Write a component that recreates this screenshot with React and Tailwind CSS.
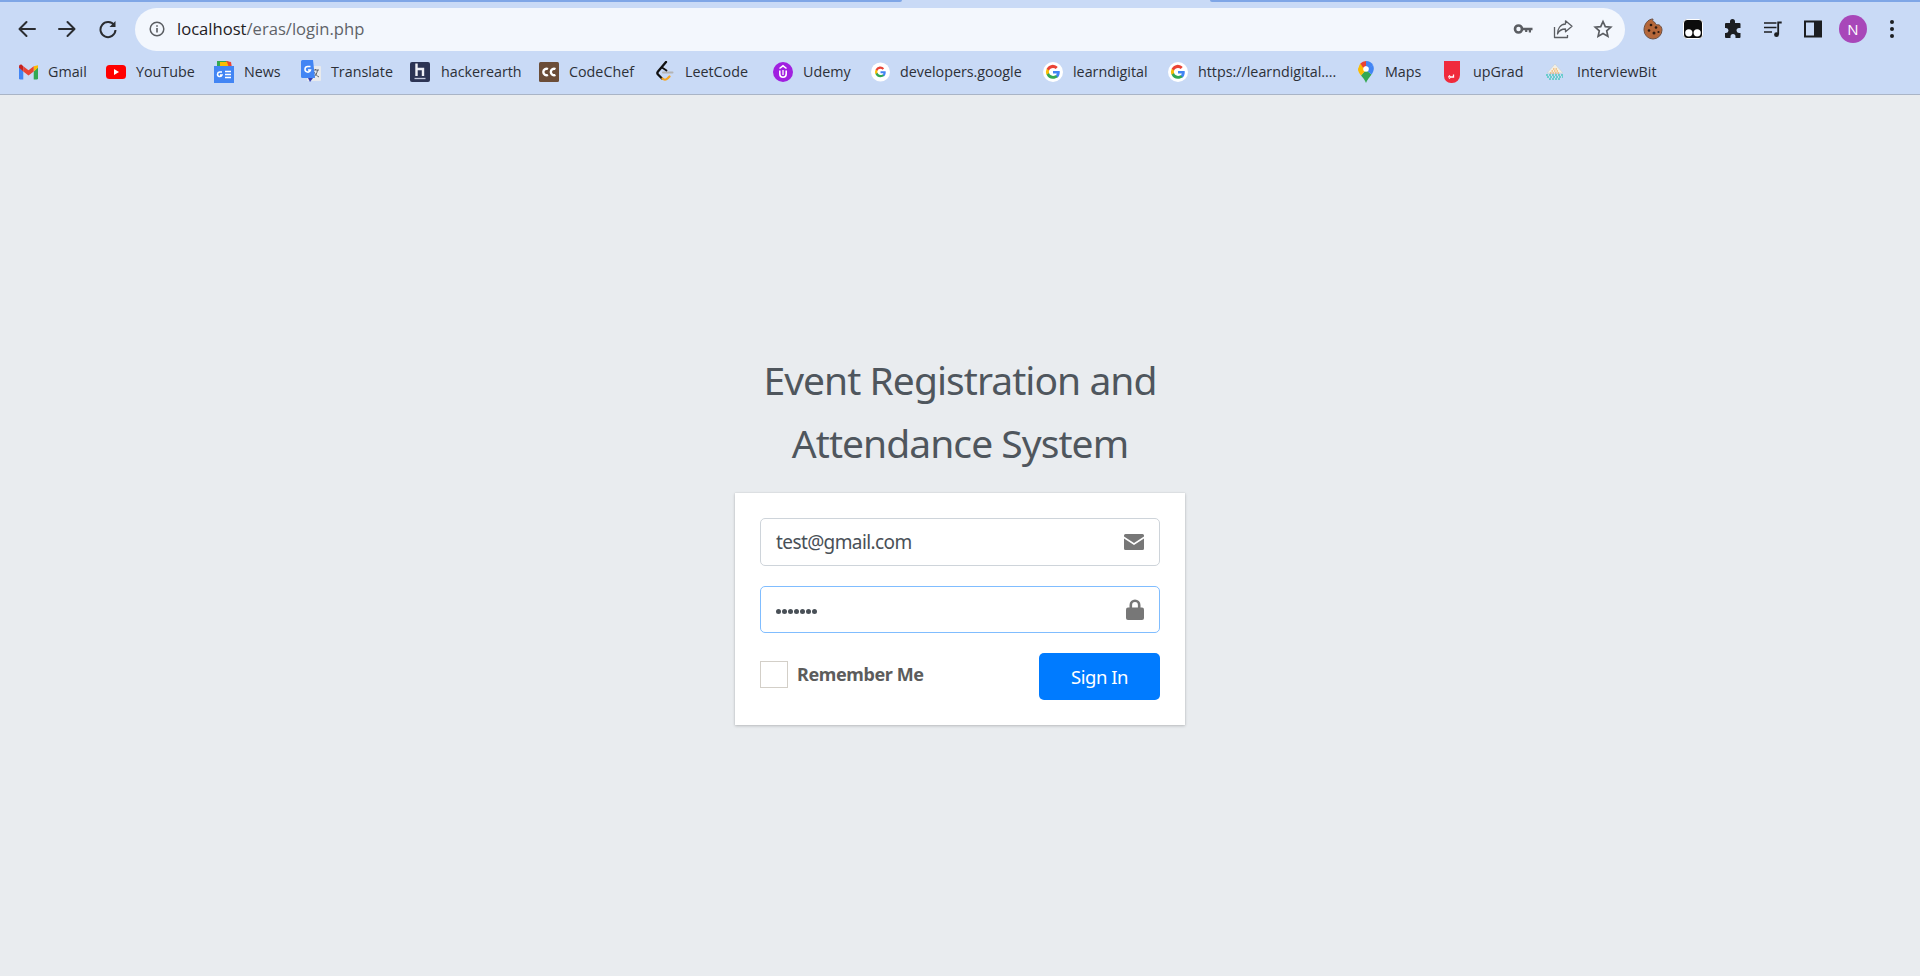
import React from "react";

const Gmail = () => (
  <svg width="20" height="16" viewBox="0 0 20 16" className="block">
    <path d="M0 3v11.5A1.5 1.5 0 0 0 1.5 16H4.5V7.5z" fill="#4285f4" />
    <path d="M20 3v11.5a1.5 1.5 0 0 1-1.500 1.500H15.500V7.500z" fill="#34a853" />
    <path d="M15.500 2 L20 0.800V3.500L15.500 7.500z" fill="#fbbc04" />
    <path d="M4.500 2 L10 6.200 15.500 2V7.500L10 11.600 4.500 7.500z" fill="#ea4335" />
    <path d="M0 3.500V2.200C0 .6 1.800-.4 3.100.6L4.500 2V7.500z" fill="#c5221f" />
  </svg>
);
const YouTube = () => (
  <svg width="20" height="14" viewBox="0 0 20 14" className="block">
    <rect width="20" height="14" rx="3.500" fill="#ff0000" />
    <path d="M8 4l5 3-5 3z" fill="#fff" />
  </svg>
);
const News = () => (
  <svg width="20" height="22" viewBox="0 0 20 22" className="block">
    <path d="M3 0h10l4 2v5H3z" fill="#34a853" />
    <path d="M12 0l5 1 1 6h-6z" fill="#ea4335" />
    <path d="M6 1h7l2 6H6z" fill="#fbbc04" />
    <rect y="5" width="20" height="17" fill="#4285f4" />
    <path d="M8 11H5.600A2.300 2.300 0 1 0 8 14H6" fill="none" stroke="#fff" strokeWidth="1.500" />
    <path d="M11 10.500h6M11 13.500h6M11 16.500h6" stroke="#fff" strokeWidth="1.500" />
  </svg>
);
const Translate = () => (
  <svg width="20" height="24" viewBox="0 0 20 24" className="block">
    <rect x="6" y="6" width="14" height="15" rx="1" fill="#e8eaed" />
    <path d="M11 10h7M14.500 9v1M12 17c3-1 4-4 4.500-7M13 12c1 2 3 4 5 5" stroke="#5f6368" strokeWidth="1" fill="none" />
    <path d="M1.500 0H12l2 18H1.500A1.500 1.500 0 0 1 0 16.500V1.500A1.500 1.500 0 0 1 1.500 0z" fill="#4285f4" />
    <path d="M9 22l-2-4h5z" fill="#3740b5" />
    <path d="M9.500 6.500H6.800A2.800 2.800 0 1 0 9.500 10H7" fill="none" stroke="#fff" strokeWidth="1.500" />
  </svg>
);
const Hacker = () => (
  <svg width="20" height="20" viewBox="0 0 20 20" className="block">
    <rect width="20" height="20" rx="2" fill="#2c3454" />
    <path d="M6.500 1.500V14M6.500 7h6.500V14" fill="none" stroke="#eef0f6" strokeWidth="2.400" />
    <path d="M4.500 16.500h11" stroke="#c4c9dc" strokeWidth="1.300" />
  </svg>
);
const CodeChef = () => (
  <svg width="20" height="20" viewBox="0 0 20 20" className="block">
    <rect width="20" height="20" rx="1.500" fill="#6b4d38" />
    <path d="M9 7A3.300 3.300 0 1 0 9 13M16.500 7A3.300 3.300 0 1 0 16.500 13" fill="none" stroke="#fff" strokeWidth="2.400" />
  </svg>
);
const LeetCode = () => (
  <svg width="18" height="22" viewBox="0 0 18 22" className="block">
    <path d="M10 1L2 10.500c-1 1.200-1 2 0 3l4 4" fill="none" stroke="#111" strokeWidth="2.300" strokeLinecap="round" />
    <path d="M6.500 17.500c1.500 1.500 3.500 1.500 5 0l2-2" fill="none" stroke="#f5a623" strokeWidth="2.300" strokeLinecap="round" />
    <path d="M7 11.500h9.500" stroke="#b4b4b4" strokeWidth="2" strokeLinecap="round" />
    <path d="M6 6.500l4.500 3" stroke="#111" strokeWidth="1.800" strokeLinecap="round" />
  </svg>
);
const Udemy = () => (
  <svg width="20" height="20" viewBox="0 0 20 20" className="block">
    <circle cx="10" cy="10" r="10" fill="#a020e0" />
    <path d="M6.800 8.500V12a3.200 3.200 0 0 0 6.400 0V8.500" fill="none" stroke="#fff" strokeWidth="1.600" />
    <path d="M6.500 6.500L10 3.800l3.500 2.700" fill="none" stroke="#fff" strokeWidth="1.500" />
    <path d="M10 8v5" stroke="#fff" strokeWidth="1.300" />
  </svg>
);
const Google = ({ scale = 1.15 }) => (
  <svg width="20" height="20" viewBox="0 0 20 20" className="block">
    <circle cx="10" cy="10" r="10" fill="#fff" />
    <g transform={`translate(10 10) scale(${scale}) translate(-10 -10)`}>
      <path d="M15 10.200c0-.4 0-.7-.1-1H10v2h2.800a2.500 2.500 0 0 1-1 1.600v1.300h1.700c1-.9 1.500-2.300 1.500-3.900z" fill="#4285f4" />
      <path d="M10 15c1.400 0 2.600-.5 3.500-1.300l-1.700-1.300c-.5.300-1.100.5-1.800.5-1.400 0-2.500-.9-2.900-2.100H5.300v1.300A5 5 0 0 0 10 15z" fill="#34a853" />
      <path d="M7.100 10.800a3 3 0 0 1 0-1.900V7.600H5.300a5 5 0 0 0 0 4.500z" fill="#fbbc04" />
      <path d="M10 7c.8 0 1.500.3 2 .8l1.500-1.500A5 5 0 0 0 5.300 7.600l1.800 1.300C7.500 7.800 8.600 7 10 7z" fill="#ea4335" />
    </g>
  </svg>
);
const Maps = () => (
  <svg width="16" height="22" viewBox="0 0 16 22" className="block">
    <path d="M8 22c-1-3-3-5-5-7.500L8 9z" fill="#34a853" />
    <path d="M8 22c1-3 3-5 5.500-8.500L8 9z" fill="#34a853" />
    <path d="M2 3L0 8c0 2.500 1.500 4.500 3 6.500L8 9z" fill="#fbbc04" />
    <path d="M2.300 2.500L5.500 6 8 9 3.500 13 .5 9z" fill="#fbbc04" />
    <path d="M2.300 2.500A8 8 0 0 1 8 0l0 5-2.700 2z" fill="#ea4335" />
    <path d="M8 0a8 8 0 0 1 7 4l-4.500 4L8 5z" fill="#4285f4" />
    <path d="M15 4c1.500 3.500.8 6.500-1.500 9.500L8 9z" fill="#4285f4" />
    <circle cx="8" cy="8" r="2.800" fill="#fff" />
  </svg>
);
const UpGrad = () => (
  <svg width="16" height="22" viewBox="0 0 16 22" className="block">
    <path d="M0 0h16v14a8 8 0 0 1-8 8H7a7 7 0 0 1-7-7z" fill="#f02a3c" />
    <path d="M6 16h3.500v-2.500M4.500 16l1.500-1.500M4.500 16L6 17.500" fill="none" stroke="#fff" strokeWidth="1.300" />
  </svg>
);
const InterviewBit = () => (
  <svg width="20" height="18" viewBox="0 0 20 18" className="block">
    <path d="M10 1L2 10h16z" fill="#f3efe4" stroke="#c3ccd6" strokeWidth=".600" />
    <path d="M8 6h4M6.500 8h7M5 10h10" stroke="#f4a13a" strokeWidth="1.200" strokeDasharray="1.500 1" />
    <path d="M1 12h18M2 14h16M4 16h12" stroke="#4cc9c0" strokeWidth="1.300" strokeDasharray="2 1" />
  </svg>
);

const bookmarks = [
  { icon: <Gmail />, label: "Gmail", box: "w-[19px] ml-[19px]", text: "w-[38px]" },
  { icon: <YouTube />, label: "YouTube", box: "w-[20px] ml-[20px]", text: "w-[58px]" },
  { icon: <News />, label: "News", box: "w-[20px] ml-[20px]", text: "w-[37px]" },
  { icon: <Translate />, label: "Translate", box: "w-[20px] ml-[20px]", text: "w-[59px]" },
  { icon: <Hacker />, label: "hackerearth", box: "w-[21px] ml-[20px]", text: "w-[78px]" },
  { icon: <CodeChef />, label: "CodeChef", box: "w-[20px] ml-[20px]", text: "w-[67px]" },
  { icon: <LeetCode />, label: "LeetCode", box: "w-[19px] ml-[20px]", text: "w-[68px]" },
  { icon: <Udemy />, label: "Udemy", box: "w-[20px] ml-[20px]", text: "w-[48px]" },
  { icon: <Google scale={1.1} />, label: "developers.google", box: "w-[19px] ml-[20px]", text: "w-[123px]" },
  { icon: <Google scale={1.35} />, label: "learndigital", box: "w-[20px] ml-[20px]", text: "w-[75px]" },
  { icon: <Google scale={1.35} />, label: "https://learndigital....", box: "w-[20px] ml-[20px]", text: "w-[140px]" },
  { icon: <Maps />, label: "Maps", box: "w-[17px] ml-[20px]", text: "w-[39px]" },
  { icon: <UpGrad />, label: "upGrad", box: "w-[19px] ml-[20px]", text: "w-[52px]" },
  { icon: <InterviewBit />, label: "InterviewBit", box: "w-[22px] ml-[20px]", text: "w-[78px]" },
];

const strokeIcon = { fill: "none", stroke: "currentColor", strokeWidth: 2, strokeLinecap: "round", strokeLinejoin: "round" };

function Toolbar() {
  return (
    <div className="flex h-[44px] items-center bg-[#c9daf6] text-[#2a2c30]">
      <div className="flex w-[135px] items-center pl-[17px]">
        <svg width="20" height="20" viewBox="0 0 20 20" {...strokeIcon}><path d="M18 10H3M9.500 3L2.500 10l7 7" /></svg>
        <svg width="20" height="20" viewBox="0 0 20 20" className="ml-[20px]" {...strokeIcon}><path d="M2 10h15M10.500 3l7 7-7 7" /></svg>
        <svg width="20" height="20" viewBox="0 0 20 20" className="ml-[21px]" {...strokeIcon} strokeLinecap="butt" strokeLinejoin="miter"><path d="M16.300 6.500A7.500 7.500 0 1 0 17.500 11" /><path d="M17.500 2v6h-6" fill="currentColor" stroke="none" /></svg>
      </div>
      <div className="flex h-[43px] flex-1 items-center rounded-full bg-[#f3f7fd] pl-[14px] pr-[12px]">
        <svg width="16" height="16" viewBox="0 0 16 16" className="text-[#5a5d62]">
          <circle cx="8" cy="8" r="6.800" fill="none" stroke="currentColor" strokeWidth="1.500" />
          <path d="M8 7v4.500M8 4.200v1.500" stroke="currentColor" strokeWidth="1.600" />
        </svg>
        <div className="ml-[12px] font-['Open_Sans','Noto_Sans',sans-serif] text-[16.600px] text-[#1f2023]">
          localhost<span className="text-[#5f6368]">/eras/login.php</span>
        </div>
        <div className="ml-auto flex items-center text-[#5a5d62]">
          <svg width="20" height="20" viewBox="0 0 20 20">
            <circle cx="5.500" cy="10" r="3.500" fill="none" stroke="currentColor" strokeWidth="2.600" />
            <path d="M9 8.700h10.500v2.600h-1.500V13.500h-2.200v-2.200h-1.500V13h-2.200v-1.700H9z" fill="currentColor" />
          </svg>
          <svg width="20" height="20" viewBox="0 0 20 20" className="ml-[20px]" fill="none" stroke="currentColor" strokeWidth="1.300" strokeLinejoin="round">
            <path d="M1.500 8v10.500h13V16" />
            <path d="M12.500 1.800l6.500 5.500-6.500 5.500V10C8.500 10 6 11.500 4.500 15 4.500 10 7 5.500 12.500 5z" />
          </svg>
          <svg width="20" height="20" viewBox="0 0 20 20" className="ml-[20px]" fill="none" stroke="currentColor" strokeWidth="1.700" strokeLinejoin="miter">
            <path d="M10 2.500l2.300 5.100 5.500.6-4.100 3.700 1.200 5.500L10 14.600l-4.900 2.800 1.200-5.500-4.100-3.700 5.500-.6z" />
          </svg>
        </div>
      </div>
      <div className="flex w-[295px] items-center pl-[18px]">
        <svg width="20" height="22" viewBox="0 0 20 22">
          <path d="M10 1c-1 2.500 1 3 2 3.500C12 7 15 7 16 6.800c1.500 1 3 2.500 3 5.200a9 9 0 1 1-18 0C1 6 5 1 10 1z" fill="#b5673a" stroke="#6e5143" strokeWidth="1" />
          <g fill="#2d1a12"><circle cx="8" cy="7" r="1.300" /><circle cx="13" cy="9.500" r="1.300" /><circle cx="6" cy="12.500" r="1.300" /><circle cx="11" cy="15" r="1.500" /><circle cx="15.500" cy="14" r="1.100" /></g>
        </svg>
        <svg width="20" height="20" viewBox="0 0 20 20" className="ml-[20px]">
          <rect x=".5" y=".5" width="19" height="19" rx="3.500" fill="#0c0c0c" stroke="#fff" strokeWidth="1" />
          <circle cx="5.800" cy="13.800" r="3.600" fill="#fff" />
          <circle cx="14.200" cy="13.800" r="3.600" fill="#fff" />
        </svg>
        <svg width="20" height="20" viewBox="0 0 20 20" className="ml-[20px]" fill="#1c1e21">
          <path d="M7 2.500a2.500 2.500 0 0 1 5 0V4h4.500a1 1 0 0 1 1 1v4h-1.500a2.500 2.500 0 0 0 0 5h1.500v4a1 1 0 0 1-1 1H12.500v-1.500a2.500 2.500 0 0 0-5 0V19H3a1 1 0 0 1-1-1V14h1a2.500 2.500 0 0 0 0-5H2V5a1 1 0 0 1 1-1h4z" />
        </svg>
        <svg width="20" height="20" viewBox="0 0 20 20" className="ml-[20px]" fill="none" stroke="#1c1e21" strokeWidth="1.700">
          <path d="M1 4h12.500M1 8.500h12.500M1 13h8" />
          <circle cx="13.500" cy="15.700" r="2.400" fill="#1c1e21" stroke="none" />
          <path d="M15.200 15.500V3.500h3.500" strokeWidth="1.800" />
        </svg>
        <svg width="20" height="20" viewBox="0 0 20 20" className="ml-[20px]">
          <rect x="2" y="2.500" width="16" height="15" fill="none" stroke="#1c1e21" strokeWidth="2" />
          <rect x="11" y="2.500" width="8" height="15" fill="#1c1e21" />
        </svg>
        <div className="ml-[16px] flex h-[28px] w-[28px] items-center justify-center rounded-full bg-[#a847b9] font-['Open_Sans',sans-serif] text-[15px] text-white">N</div>
        <svg width="6" height="20" viewBox="0 0 6 20" className="ml-[22px]" fill="#1c1e21">
          <circle cx="3" cy="3" r="2" /><circle cx="3" cy="10" r="2" /><circle cx="3" cy="17" r="2" />
        </svg>
      </div>
    </div>
  );
}

function Bookmarks() {
  return (
    <div className="flex h-[44px] items-center border-b border-[#a9b4c6] bg-[#c9daf6] pb-[2px] font-['Open_Sans','Noto_Sans',sans-serif] text-[14.300px] text-[#2c3038]">
      {bookmarks.map((b) => (
        <div key={b.label} className="flex items-center">
          <div className={`flex justify-start ${b.box}`}>{b.icon}</div>
          <div className={`ml-[10px] whitespace-nowrap ${b.text}`}>{b.label}</div>
        </div>
      ))}
    </div>
  );
}

function LoginForm() {
  return (
    <div className="w-[450px] font-['Noto_Sans','Open_Sans',sans-serif]">
      <div className="mb-[19px] text-center text-[39px] leading-[63px] tracking-[-0.950px] text-[#4f565d]">
        Event Registration and<br />Attendance System
      </div>
      <div className="h-[232px] bg-white p-[25px] shadow-[0_0_1px_rgba(0,0,0,0.125),0_1px_3px_rgba(0,0,0,0.2)]">
        <div className="flex h-[48px] items-center rounded-[5px] border border-[#ced4da] pl-[15px] pr-[15px]">
          <span className="text-[19px] tracking-[-0.600px] text-[#495057]">test@gmail.com</span>
          <svg width="20" height="16" viewBox="0 0 20 16" className="ml-auto" fill="#777">
            <path d="M1.500 0h17A1.500 1.500 0 0 1 20 1.500v1L10 9 0 2.500v-1A1.500 1.500 0 0 1 1.500 0z" />
            <path d="M0 4.500v10A1.500 1.500 0 0 0 1.500 16h17a1.500 1.500 0 0 0 1.500-1.500v-10L10 11z" />
          </svg>
        </div>
        <div className="mt-[20px] flex h-[47px] items-center rounded-[5px] border border-[#80bdff] pl-[15px] pr-[15px]">
          <div className="mt-[4px] flex gap-[1.500px]">
            {[0, 1, 2, 3, 4, 5, 6].map((i) => (
              <span key={i} className="h-[4.500px] w-[4.500px] rounded-full bg-[#495057]" />
            ))}
          </div>
          <svg width="18" height="21" viewBox="0 0 18 21" className="ml-auto" fill="#777">
            <path d="M3.500 9V6a5.500 5.500 0 0 1 11 0v3h-2.600V6a2.900 2.900 0 0 0-5.800 0v3z" />
            <rect y="8.500" width="18" height="12.500" rx="2" />
          </svg>
        </div>
        <div className="mt-[20px] flex items-center justify-between">
          <div className="mb-[4px] flex items-center">
            <div className="h-[27px] w-[28px] border border-[#d3cfc8] bg-white" />
            <span className="ml-[9px] text-[18px] font-bold tracking-[-0.400px] text-[#5c5c5c]">Remember Me</span>
          </div>
          <div className="flex h-[47px] w-[121px] items-center justify-center rounded-[5px] bg-[#007bff] text-[18.500px] tracking-[-0.500px] text-white">
            Sign In
          </div>
        </div>
      </div>
    </div>
  );
}

export default function App() {
  return (
    <div className="flex h-[976px] flex-col overflow-hidden bg-[#e9ecef]">
      <div className="flex h-[7px] bg-[#c9daf6]">
        <div className="h-[2px] w-[902px] rounded-br-[4px] bg-[#7fa6e6]" />
        <div className="ml-[308px] h-[2px] flex-1 rounded-bl-[4px] bg-[#7fa6e6]" />
      </div>
      <Toolbar />
      <Bookmarks />
      <main className="flex flex-1 items-center justify-center pt-[2px]">
        <LoginForm />
      </main>
    </div>
  );
}
